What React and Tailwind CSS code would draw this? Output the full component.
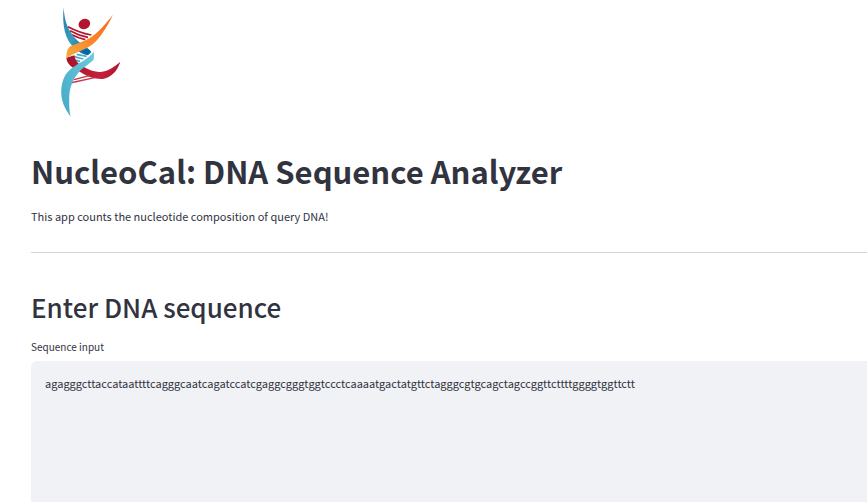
function Logo() {
  return (
    <svg viewBox="0 0 240 360" className="h-[120px] w-20" role="img" aria-label="NucleoCal logo">
      <defs>
        <linearGradient id="blue" x1="0" y1="0" x2="1" y2="1">
          <stop offset="0" stopColor="#2b7aa6" />
          <stop offset="0.5" stopColor="#3b9cc0" />
          <stop offset="0.85" stopColor="#0068a8" />
        </linearGradient>
        <linearGradient id="orange" x1="1" y1="0" x2="0" y2="1">
          <stop offset="0" stopColor="#f26a21" />
          <stop offset="0.5" stopColor="#fb8426" />
          <stop offset="1" stopColor="#f3ac45" />
        </linearGradient>
        <linearGradient id="red" x1="0" y1="0" x2="1" y2="0">
          <stop offset="0" stopColor="#a5142a" />
          <stop offset="0.6" stopColor="#c4203a" />
          <stop offset="1" stopColor="#b0152f" />
        </linearGradient>
        <linearGradient id="cyan" x1="1" y1="0" x2="0" y2="1">
          <stop offset="0" stopColor="#6ccbdc" />
          <stop offset="1" stopColor="#43a9c6" />
        </linearGradient>
      </defs>
      <ellipse cx="103" cy="72" rx="18" ry="15" transform="rotate(-28 103 72)" fill="#b3142f" />
      <g fill="none" stroke="#b3142f" strokeWidth="5">
        <path d="M54 80 Q85 97 124 105" />
        <path d="M60 92 Q85 106 114 112" />
        <path d="M66 104 Q85 114 106 119" />
      </g>
      <path d="M41 22 C43 65 54 88 73 112 C88 132 116 143 124 156 L114 166 C101 164 89 158 76 147 C44 120 36 76 41 22Z" fill="url(#blue)" />
      <g fill="none" stroke="#4aaecb" strokeWidth="5">
        <path d="M80 163 L110 169" />
        <path d="M72 170 L100 177" />
        <path d="M78 181 L90 184" />
      </g>
      <path d="M49 173 L73 166 C75 180 86 195 103 202 C121 211 136 217 151 216 C178 213 194 199 211 185 C202 213 184 232 158 237 C135 238 112 230 92 217 C70 203 51 196 49 173Z" fill="url(#red)" />
      <g fill="none" stroke="#c4354a" strokeWidth="4">
        <path d="M72 239 L118 227" />
        <path d="M60 249 L134 233" />
      </g>
      <path d="M189 44 C171 80 153 111 128 133 C106 151 70 158 49 176 C49 161 51 147 59 140 C76 130 103 127 127 109 C151 91 172 65 189 44Z" fill="url(#orange)" />
      <path d="M131 155 C132 163 133 173 130 180 C118 193 96 203 84 220 C67 241 60 262 58 286 C57 315 58 335 62 350 C45 329 31 299 34 268 C36 240 46 218 67 203 C87 188 115 178 131 155Z" fill="url(#cyan)" />
    </svg>
  );
}

export default function App() {
  return (
    <main className="flex min-h-screen flex-col bg-white pl-[31px] font-['Noto_Sans_CJK_SC',sans-serif] text-[#31333f]">
      <div className="pl-[19px]">
        <Logo />
      </div>
      <h1 className="mt-[31px] text-[31px] leading-10 font-bold">NucleoCal: DNA Sequence Analyzer</h1>
      <p className="mt-[15px] text-[11px] leading-5">This app counts the nucleotide composition of query DNA!</p>
      <hr className="mt-[26px] border-[#d6d6d8]" />
      <h2 className="mt-[34px] text-[26px] leading-10 font-medium">Enter DNA sequence</h2>
      <label htmlFor="sequence" className="mt-3 text-[10px] leading-4">
        Sequence input
      </label>
      <textarea
        id="sequence"
        className="mt-1.5 block w-full flex-1 resize-none rounded-tl-md bg-[#f0f2f6] px-3.5 py-3 text-[11px] leading-5 outline-none"
        spellCheck={false}
        defaultValue="agagggcttaccataattttcagggcaatcagatccatcgaggcgggtggtccctcaaaatgactatgttctagggcgtgcagctagccggttcttttggggtggttctt"
      />
    </main>
  );
}
